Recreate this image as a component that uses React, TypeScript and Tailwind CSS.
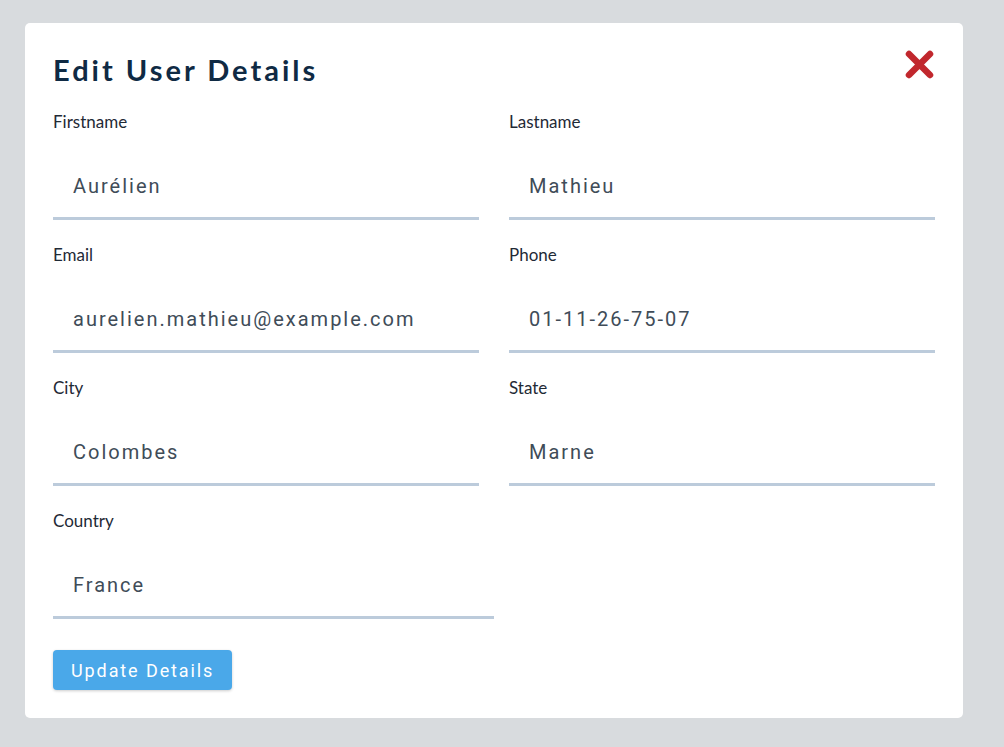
import React, { useState } from "react";

type Field = { key: string; label: string; value: string };

const initial: Field[] = [
  { key: "firstname", label: "Firstname", value: "Aurélien" },
  { key: "lastname", label: "Lastname", value: "Mathieu" },
  { key: "email", label: "Email", value: "aurelien.mathieu@example.com" },
  { key: "phone", label: "Phone", value: "01-11-26-75-07" },
  { key: "city", label: "City", value: "Colombes" },
  { key: "state", label: "State", value: "Marne" },
  { key: "country", label: "Country", value: "France" },
];

function Input({ field, onChange }: { field: Field; onChange: (v: string) => void }) {
  return (
    <label className="flex flex-col">
      <span className="text-[17px] leading-5 text-[#1f2a36] font-['Lato',sans-serif]">
        {field.label}
      </span>
      <input
        value={field.value}
        onChange={(e) => onChange(e.target.value)}
        className="mt-[34px] h-[54px] border-b-[3px] border-[#bccbdb] px-5 pt-0 pb-[11px] text-[20px] leading-[40px] tracking-[2px] text-[#404c58] font-['Roboto',sans-serif] outline-none"
      />
    </label>
  );
}

export default function App() {
  const [fields, setFields] = useState(initial);

  const update = (key: string, value: string) =>
    setFields((prev) => prev.map((f) => (f.key === key ? { ...f, value } : f)));

  return (
    <div className="min-h-[747px] bg-[#d8dbde] pl-[25px] pt-[23px] pb-[29px]">
      <div className="relative w-[938px] bg-white rounded-[5px] px-[28px] pt-[29px] pb-[28px]">
        <h1 className="text-[29px] leading-[36px] font-bold tracking-[3px] text-[#0f2a44] font-['Lato',sans-serif]">
          Edit User Details
        </h1>
        <button className="absolute top-[27px] right-[29px] p-0">
          <svg width="29" height="29" viewBox="0 0 29 29" className="block">
            <path d="M4 4 L25 25 M25 4 L4 25" stroke="#c1272d" strokeWidth="6.5" strokeLinecap="round" />
          </svg>
        </button>
        <div className="mt-[24px] grid grid-cols-2 gap-x-[30px] gap-y-[25px]">
          {fields.map((f) => (
            <div key={f.key} className={f.key === "country" ? "w-[441px]" : ""}>
              <Input field={f} onChange={(v) => update(f.key, v)} />
            </div>
          ))}
        </div>
        <button className="mt-[31px] h-[40px] px-[18px] rounded-[4px] bg-[#4aa8e9] text-white text-[18px] tracking-[1.9px] font-['Roboto',sans-serif] shadow-[0_1px_3px_rgba(0,0,0,0.2)]">
          Update Details
        </button>
      </div>
    </div>
  );
}
